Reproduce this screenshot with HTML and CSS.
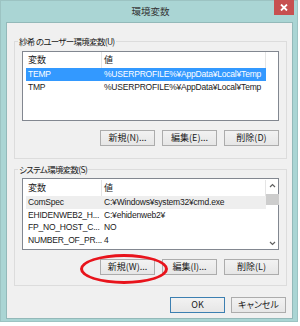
FILE: index.html
```html
<!DOCTYPE html>
<html lang="ja">
<head>
<meta charset="utf-8">
<link rel="stylesheet" href="styles.css">
</head>
<body>
<div class="window">
  <div class="titlebar">
    <span class="title">環境変数</span>
    <span class="close"><svg width="8" height="7" viewBox="0 0 8 7"><path d="M1 0.5 L7 6.5 M7 0.5 L1 6.5" stroke="#fff" stroke-width="1.8"/></svg></span>
  </div>
  <div class="client">
    <fieldset class="group g1">
      <legend>紗希 のユーザー環境変数(U)</legend>
      <div class="list l1">
        <div class="head"><span class="c1">変数</span><span class="c2">値</span></div>
        <div class="row sel"><span class="c1">TEMP</span><span class="c2">%USERPROFILE%¥AppData¥Local¥Temp</span></div>
        <div class="row"><span class="c1">TMP</span><span class="c2">%USERPROFILE%¥AppData¥Local¥Temp</span></div>
      </div>
      <div class="btns">
        <button class="btn">新規(N)...</button>
        <button class="btn">編集(E)...</button>
        <button class="btn">削除(D)</button>
      </div>
    </fieldset>
    <fieldset class="group g2">
      <legend>システム環境変数(S)</legend>
      <div class="list l2">
        <div class="listbody">
          <div class="head"><span class="c1">変数</span><span class="c2">値</span></div>
          <div class="row hot"><span class="c1">ComSpec</span><span class="c2">C:¥Windows¥system32¥cmd.exe</span></div>
          <div class="row"><span class="c1">EHIDENWEB2_H...</span><span class="c2">C:¥ehidenweb2¥</span></div>
          <div class="row"><span class="c1">FP_NO_HOST_C...</span><span class="c2">NO</span></div>
          <div class="row"><span class="c1">NUMBER_OF_PR...</span><span class="c2">4</span></div>
        </div>
        <div class="scroll">
          <svg class="arr" width="7" height="5" viewBox="0 0 7 5"><path d="M1 4 L3.5 1.5 L6 4" fill="none" stroke="#606060" stroke-width="1.2"/></svg>
          <div class="thumb"></div>
          <div class="track"></div>
          <svg class="arr" width="7" height="5" viewBox="0 0 7 5"><path d="M1 1 L3.5 3.5 L6 1" fill="none" stroke="#606060" stroke-width="1.2"/></svg>
        </div>
      </div>
      <div class="btns">
        <button class="btn">新規(W)...</button>
        <button class="btn">編集(I)...</button>
        <button class="btn">削除(L)</button>
      </div>
    </fieldset>
    <div class="footer">
      <button class="btn ok">OK</button>
      <button class="btn">キャンセル</button>
    </div>
  </div>
  <div class="mark"></div>
</div>
</body>
</html>
```
FILE: styles.css
```css
* { box-sizing: border-box; }
html, body { margin: 0; padding: 0; background: #ffffff; }
body {
  font-family: "Noto Sans CJK JP", sans-serif;
  font-size: 9px;
  color: #1a1a1a;
  font-feature-settings: "palt";
}
.window {
  position: relative;
  width: 298px;
  height: 322px;
  background: #aad5d4;
  border: 1px solid #9cc3c2;
  padding: 0 4px 2px 5px;
  display: flex;
  flex-direction: column;
}
.titlebar {
  height: 21px;
  display: flex;
  align-items: flex-start;
  justify-content: center;
  position: relative;
}
.title {
  font-size: 9.5px;
  line-height: 21px;
  color: #333;
  padding-left: 2px;
}
.close {
  position: absolute;
  right: -1px;
  top: -1px;
  width: 20px;
  height: 15px;
  background: #c75050;
  display: flex;
  align-items: center;
  justify-content: center;
}
.client {
  flex: 1;
  background: #f0f0f0;
  border: 1px solid #93b9b9;
  padding: 11px 5px 0 7px;
  display: flex;
  flex-direction: column;
}
.group {
  margin: 0;
  border: 1px solid #dcdcdc;
  padding: 0 7px 0 7px;
  min-width: 0;
}
legend {
  font-size: 8.5px;
  line-height: 14px;
  letter-spacing: -0.7px;
  padding: 0 1px;
  margin-left: -4px;
  color: #1a1a1a;
}
.g1 { height: 125px; padding-top: 3px; }
.g2 { height: 124px; margin-top: 3px; padding-top: 2px; }
.list {
  background: #fff;
  border: 1px solid #828790;
  width: 257px;
}
.l1 { height: 70px; padding-left: 3px; }
.l2 { height: 72px; display: flex; padding-left: 3px; }
.listbody { flex: 1; }
.head {
  height: 16px;
  display: flex;
  align-items: center;
  font-size: 9px;
  width: 240px;
}
.head .c1, .head .c2 {
  border-right: 1px solid #e5e5e5;
  height: 16px;
  line-height: 16px;
}
.c1 { width: 76px; padding-left: 2px; flex: none; overflow: hidden; white-space: nowrap; }
.c2 { flex: 1; padding-left: 2px; white-space: nowrap; overflow: hidden; }
.row {
  display: flex;
  height: 13px;
  line-height: 13px;
  width: 240px;
  white-space: nowrap;
  font-family: "Liberation Sans", "Noto Sans CJK JP", sans-serif;
  font-size: 8.5px;
  letter-spacing: -0.2px;
}
.l2 .head { height: 17px; }
.l2 .row { height: 12.5px; line-height: 12.5px; }
.sel { background: #3399ff; color: #fff; }
.hot { background: #eeeeee; }
.scroll {
  width: 13px;
  display: flex;
  flex-direction: column;
  align-items: center;
  padding-top: 4px;
}
.thumb {
  width: 13px;
  height: 11px;
  background: #cdcdcd;
  margin-top: 3px;
}
.track { flex: 1; }
.arr { display: block; margin-bottom: 3px; }
.btns {
  display: flex;
  justify-content: flex-end;
  gap: 7px;
  margin-top: 9px;
}
.btn {
  width: 55px;
  height: 16px;
  padding: 0;
  border: 1px solid #acacac;
  background: linear-gradient(#f2f2f2, #e6e6e6);
  font-family: "Noto Sans CJK JP", sans-serif;
  font-feature-settings: "palt";
  font-size: 9px;
  line-height: 14px;
  color: #1a1a1a;
}
.footer {
  display: flex;
  justify-content: flex-end;
  gap: 6px;
  margin-top: 11px;
  padding-right: 1px;
}
.ok { border-color: #3c7fb1; }
.mark {
  position: absolute;
  left: 79px;
  top: 253px;
  width: 88px;
  height: 30px;
  border: 3px solid #e8141c;
  border-radius: 50%;
}
```
